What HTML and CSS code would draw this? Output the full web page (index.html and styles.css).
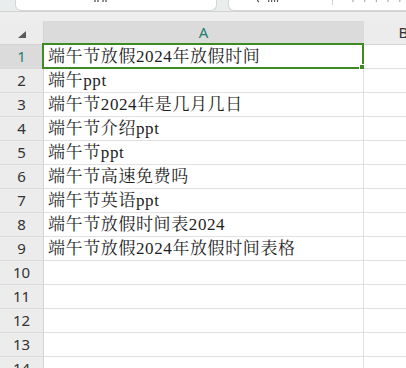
FILE: index.html
```html
<!DOCTYPE html>
<html lang="zh-CN">
<head>
    <meta charset="UTF-8">
    <meta name="viewport" content="width=device-width, initial-scale=1.0">
    <title>端午节</title>
    <link rel="stylesheet" href="styles.css">
</head>
<body>
    <div class="toolbar">
        <div class="bar-box name-box">
            <svg class="marks" width="16" height="3" viewBox="0 0 16 3">
                <path d="M1 0v2M4 0v2M9 0v2M12 0v2" stroke="#444" stroke-width="1.2"/>
            </svg>
        </div>
        <div class="bar-box formula-box">
            <svg class="marks" width="26" height="3" viewBox="0 0 26 3">
                <path d="M0 0l2 2M12 0v2M15 0v2M18 0v2M21 0v2" stroke="#555" stroke-width="1.2"/>
            </svg>
            <span class="sep"></span>
            <svg class="marks light" width="56" height="3" viewBox="0 0 56 3">
                <path d="M2 0v2M14 0v2M26 0v2M38 0v2M50 0v2" stroke="#aaa" stroke-width="1.2"/>
            </svg>
        </div>
    </div>

    <div class="sheet">
        <div class="corner"><span class="tri"></span></div>
        <div class="col-head active">A</div>
        <div class="col-head">B</div>
    </div>

    <div class="sheet" id="rows"></div>

    <script>
        const data = [
            '端午节放假2024年放假时间',
            '端午ppt',
            '端午节2024年是几月几日',
            '端午节介绍ppt',
            '端午节ppt',
            '端午节高速免费吗',
            '端午节英语ppt',
            '端午节放假时间表2024',
            '端午节放假2024年放假时间表格'
        ];
        const rows = document.getElementById('rows');

        for (let i = 1; i <= 14; i++) {
            const num = document.createElement('div');
            num.className = 'row-head' + (i === 1 ? ' active' : '');
            num.innerText = i;

            const a = document.createElement('div');
            a.className = 'cell';
            a.innerText = data[i - 1] || '';
            if (i === 1) {
                const sel = document.createElement('div');
                sel.className = 'selection';
                const handle = document.createElement('div');
                handle.className = 'handle';
                sel.appendChild(handle);
                a.appendChild(sel);
            }

            const b = document.createElement('div');
            b.className = 'cell';

            rows.appendChild(num);
            rows.appendChild(a);
            rows.appendChild(b);
        }
    </script>
</body>
</html>
```

FILE: styles.css
```css
body {
    margin: 0;
    background: #eeeeee;
    overflow: hidden;
    font-family: "Noto Sans", "Noto Sans CJK SC", sans-serif;
}

.toolbar {
    display: flex;
    height: 11px;
    border-bottom: 1px solid #d2d2d2;
    background: #e9eded;
    margin-bottom: 9px;
}

.bar-box {
    height: 11px;
    box-sizing: border-box;
    background: #fff;
    border: 1px solid #d6d6d6;
    border-top: none;
    border-radius: 0 0 6px 6px;
    overflow: hidden;
    display: flex;
    align-items: flex-start;
}

.name-box {
    width: 202px;
    margin-left: 15px;
    padding-left: 78px;
}

.formula-box {
    flex: 1;
    margin-left: 11px;
    padding-left: 28px;
    border-right: none;
    border-radius: 0 0 0 6px;
}

.marks {
    display: block;
}

.marks.light {
    margin-left: 18px;
}

.sep {
    width: 1px;
    height: 5px;
    background: #d0d0d0;
    margin-left: 50px;
}

.sheet {
    display: grid;
    grid-template-columns: 44px 320px 80px;
}

.corner,
.col-head,
.row-head,
.cell {
    height: 24px;
    box-sizing: border-box;
    border-right: 1px solid #d4d4d4;
    border-bottom: 1px solid #d4d4d4;
}

.corner {
    display: flex;
    justify-content: center;
    align-items: center;
    background: #ececec;
}

.tri {
    width: 0;
    height: 0;
    border-left: 8px solid transparent;
    border-bottom: 7px solid #5a5a5a;
    margin: 3px 0 0 1px;
}

.col-head {
    background: #ececec;
    text-align: center;
    font-size: 15px;
    line-height: 23px;
    color: #333;
}

.col-head.active {
    background: #dbdbdb;
    color: #1f7f6e;
    border-right-color: #dbdbdb;
}

.row-head {
    background: #ececec;
    text-align: center;
    font-size: 15px;
    line-height: 23px;
    color: #333;
    border-bottom-color: #d9d9d9;
}

.row-head.active {
    background: #dbdbdb;
    color: #1f7f6e;
}

.cell {
    position: relative;
    background: #fff;
    border-right-color: #e1e1e1;
    border-bottom-color: #e1e1e1;
    padding-left: 4px;
    font-family: "Liberation Serif", "Noto Serif CJK SC", "Noto Sans CJK SC", serif;
    font-size: 17px;
    letter-spacing: 0.6px;
    line-height: 23px;
    color: #1e1e1e;
    white-space: nowrap;
}

.selection {
    position: absolute;
    top: -2px;
    left: -2px;
    right: -1px;
    bottom: -1px;
    border: 2px solid #3d8b22;
}

.handle {
    position: absolute;
    right: -3px;
    bottom: -3px;
    width: 5px;
    height: 5px;
    background: #3d8b22;
    outline: 1px solid #fff;
}
```
